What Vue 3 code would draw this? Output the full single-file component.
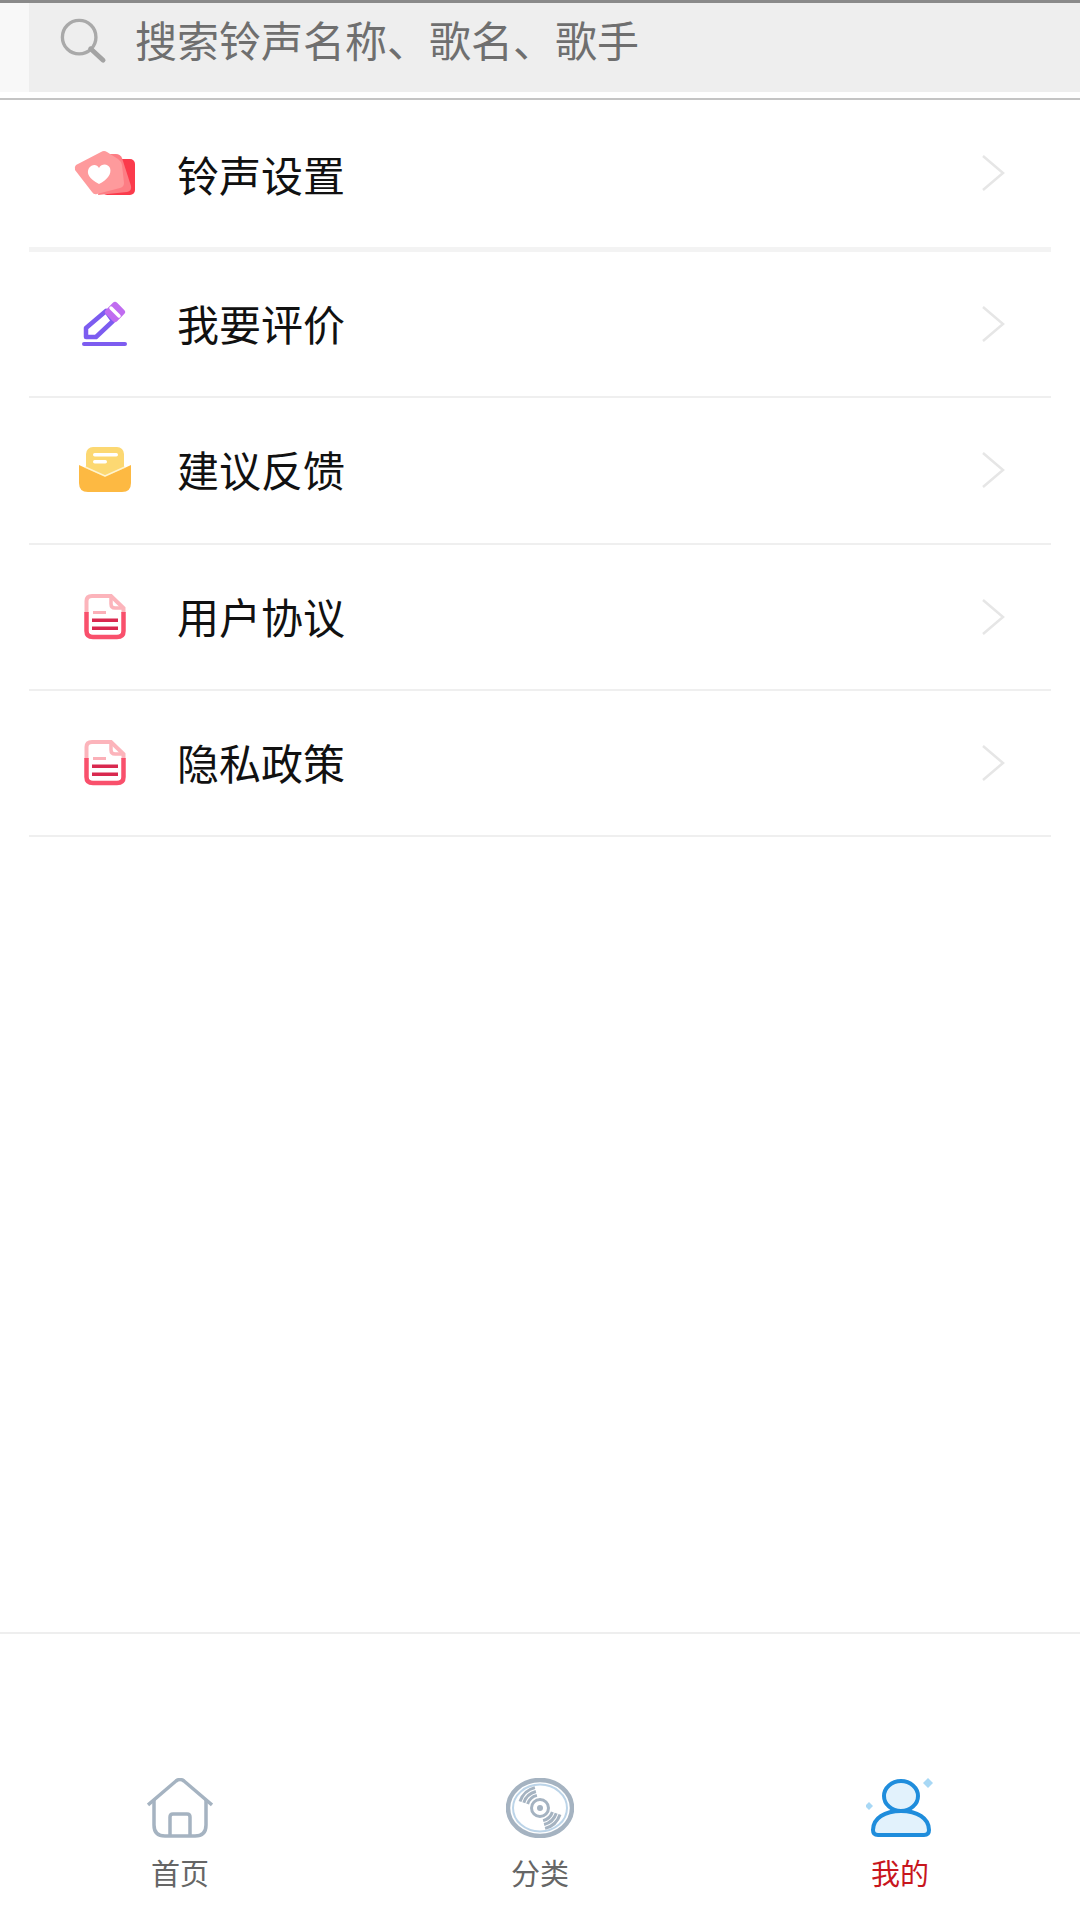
<template>
  <div class="page">
    <div class="top-line"></div>
    <div class="search-wrap">
      <div class="search-bar">
        <svg class="search-icon" viewBox="0 0 48 48" fill="none">
          <circle cx="20" cy="20" r="17.5" stroke="#a9a9a9" stroke-width="3.5" />
          <path d="M32 32 L45 44" stroke="#a3a3a3" stroke-width="5" stroke-linecap="round" />
        </svg>
        <span class="search-text">搜索铃声名称、歌名、歌手</span>
      </div>
    </div>
    <div class="search-line"></div>

    <div class="menu">
      <div v-for="item in menu" :key="item.title" class="row" :class="{ first: item.icon === 'ring' }">
        <div class="row-icon">
          <svg v-if="item.icon === 'ring'" width="62" height="46" viewBox="0 0 62 46">
            <rect x="28" y="9" width="33" height="36" rx="5" fill="#fb3b4c" />
            <path d="M32 4 L42 4 Q46 4 48 8 L57 36 Q58 41 53 42 L24 45 Z" fill="#fd7d84" />
            <path d="M2 15 L27 2 Q30 0 33 2 L44 9 Q47 11 48 15 L50 33 Q50 37 46 38 L23 44 Q20 45 18 42 L1 20 Q0 17 2 15 Z" fill="#fe9a9c" />
            <path d="M25 34 C15 29 12 23 15 18 C18 14 23 14 25 18 C28 13 34 14 36 18 C38 24 33 30 25 34 Z" fill="#fff" />
          </svg>
          <svg v-else-if="item.icon === 'edit'" width="46" height="46" viewBox="0 0 46 46" fill="none">
            <path d="M4 36 L4 27 L24 10 L31 20 L14 36 Z" stroke="#7c5cf0" stroke-width="4.5" stroke-linejoin="round" />
            <rect x="25" y="3" width="16" height="16" rx="3" transform="rotate(45 33 11)" fill="#c06cf0" />
            <path d="M29 7 L37 15" stroke="#fff" stroke-width="3.5" stroke-linecap="round" />
            <path d="M2 43 H43" stroke="#7d5cf0" stroke-width="4" stroke-linecap="round" />
          </svg>
          <svg v-else-if="item.icon === 'mail'" width="52" height="46" viewBox="0 0 52 46">
            <rect x="7" y="0" width="38" height="32" rx="7" fill="#fcd872" />
            <rect x="14" y="6" width="25" height="3.5" rx="1.7" fill="#fff" />
            <rect x="14" y="13" width="14" height="3.5" rx="1.7" fill="#fff" />
            <path d="M0 18 L26 30 L52 18 V36 Q52 45 43 45 H9 Q0 45 0 36 Z" fill="#fdb942" />
            <path d="M6 20 L26 29 L46 20" fill="none" stroke="#fff3cf" stroke-width="1.5" />
          </svg>
          <svg v-else width="42" height="46" viewBox="0 0 42 46" fill="none">
            <path d="M2.5 19 V7 Q2.5 2 8 2 H27 L39.5 14 V19" stroke="#fcb4bb" stroke-width="4" />
            <path d="M27 2 V10 Q27 14 31 14 H40" stroke="#fcb4bb" stroke-width="3.5" />
            <path d="M2.5 18 V37 Q2.5 43 9 43 H33 Q39.5 43 39.5 37 V18" stroke="#f9506c" stroke-width="4.5" />
            <rect x="9" y="17" width="13" height="3" fill="#fbb0b8" />
            <rect x="8" y="24.5" width="26" height="3.5" fill="#d9294f" />
            <rect x="8" y="32.5" width="26" height="3.5" fill="#d9294f" />
          </svg>
        </div>
        <span class="row-title">{{ item.title }}</span>
        <svg class="arrow" width="24" height="38" viewBox="0 0 24 38" fill="none">
          <path d="M2 2 L22 19 L2 36" stroke="#e6e6e6" stroke-width="2.5" />
        </svg>
      </div>
    </div>

    <div class="spacer"></div>

    <div class="tabbar">
      <div v-for="tab in tabs" :key="tab.label" class="tab" :class="{ active: tab.active }">
        <svg v-if="tab.label === '首页'" width="66" height="60" viewBox="0 0 66 60" fill="none">
          <path d="M1 27 L29 3 Q33 0 37 3 L65 27" stroke="#a5b3c1" stroke-width="3.5" />
          <path d="M7 22 V47 Q7 58 18 58 H48 Q59 58 59 47 V22" stroke="#a5b3c1" stroke-width="3.5" />
          <path d="M23 58 V39 Q23 36 26 36 H40 Q43 36 43 39 V58" stroke="#a5b3c1" stroke-width="3.5" />
        </svg>
        <svg v-else-if="tab.label === '分类'" width="68" height="60" viewBox="0 0 68 60" fill="none">
          <ellipse cx="34" cy="30" rx="32" ry="28" stroke="#a5b3c1" stroke-width="4.5" />
          <ellipse cx="34" cy="30" rx="27" ry="23.5" stroke="#bcd4e8" stroke-width="2" />
          <circle cx="34" cy="30" r="8.5" stroke="#a5b3c1" stroke-width="3" />
          <circle cx="34" cy="30" r="3" fill="#a5b3c1" />
          <path d="M21.6 26 A13 13 0 0 1 30.9 17.4 M17.8 24.7 A17 17 0 0 1 29.9 13.5 M14 23.5 A21 21 0 0 1 28.9 9.6" stroke="#a5b3c1" stroke-width="3" />
          <path d="M46.4 34 A13 13 0 0 1 37.1 42.6 M50.2 35.3 A17 17 0 0 1 38.1 46.5 M54 36.5 A21 21 0 0 1 39.1 50.4" stroke="#a5b3c1" stroke-width="3" />
        </svg>
        <svg v-else width="68" height="60" viewBox="0 0 68 60" fill="none">
          <ellipse cx="35" cy="18" rx="17" ry="15" fill="#e2f2fc" stroke="#1f8ddc" stroke-width="4" />
          <path d="M7 52 C7 40 19 33 35 33 C51 33 63 40 63 52 Q63 57 58 57 H12 Q7 57 7 52 Z" fill="#e2f2fc" stroke="#1f8ddc" stroke-width="4" />
          <path d="M62 0 L67 5 L62 10 L57 5 Z" fill="#a8d8f5" />
          <path d="M3 24 L7 28 L3 32 L-1 28 Z" fill="#a8d8f5" />
        </svg>
        <span class="tab-label">{{ tab.label }}</span>
      </div>
    </div>
  </div>
</template>

<script setup>
const menu = [
  { title: '铃声设置', icon: 'ring' },
  { title: '我要评价', icon: 'edit' },
  { title: '建议反馈', icon: 'mail' },
  { title: '用户协议', icon: 'doc' },
  { title: '隐私政策', icon: 'doc' }
]

const tabs = [
  { label: '首页' },
  { label: '分类' },
  { label: '我的', active: true }
]
</script>

<style>
html,
body {
  margin: 0;
  background: #fff;
}
</style>

<style scoped>
.page {
  width: 1080px;
  height: 1920px;
  display: flex;
  flex-direction: column;
  background: #fff;
  font-family: "Noto Sans CJK SC", "Liberation Sans", sans-serif;
}

.top-line {
  height: 3px;
  background: #8a8a8a;
}

.search-wrap {
  height: 89px;
  padding-left: 29px;
  background: #f8f8f8;
}

.search-bar {
  height: 100%;
  box-sizing: border-box;
  padding-bottom: 14px;
  display: flex;
  align-items: center;
  background: #eeeeee;
}

.search-icon {
  width: 48px;
  height: 46px;
  margin-left: 30px;
  flex-shrink: 0;
}

.search-text {
  margin-left: 28px;
  margin-bottom: 5px;
  font-size: 42px;
  color: #6f6f6f;
}

.search-line {
  height: 10px;
  box-sizing: border-box;
  background: #fff;
  border-top: 2px solid #c4c4c4;
  margin-top: 6px;
}

.menu {
  margin-top: -9px;
  padding: 0 29px;
}

.row {
  height: 146.3px;
  box-sizing: border-box;
  display: flex;
  align-items: center;
  border-bottom: 2px solid #efefef;
}

.row.first {
  height: 153px;
  border-bottom: 5px solid #f3f3f3;
}

.row-icon {
  width: 148px;
  box-sizing: border-box;
  display: flex;
  justify-content: center;
  padding-left: 25px;
  padding-right: 21px;
}

.row-title {
  flex: 1;
  margin-top: -3px;
  font-size: 42px;
  color: #111;
}

.row.first .row-title {
  margin-top: 0;
}

.arrow {
  margin-right: 46px;
}

.spacer {
  flex: 1;
}

.tabbar {
  height: 288px;
  box-sizing: border-box;
  border-top: 2px solid #eeeeee;
  display: flex;
  padding: 0 0 28px;
  align-items: flex-end;
}

.tab {
  flex: 1;
  display: flex;
  flex-direction: column;
  align-items: center;
  gap: 14px;
}

.tab-label {
  font-size: 29px;
  line-height: 40px;
  color: #666;
}

.tab.active .tab-label {
  color: #c8161d;
}
</style>
